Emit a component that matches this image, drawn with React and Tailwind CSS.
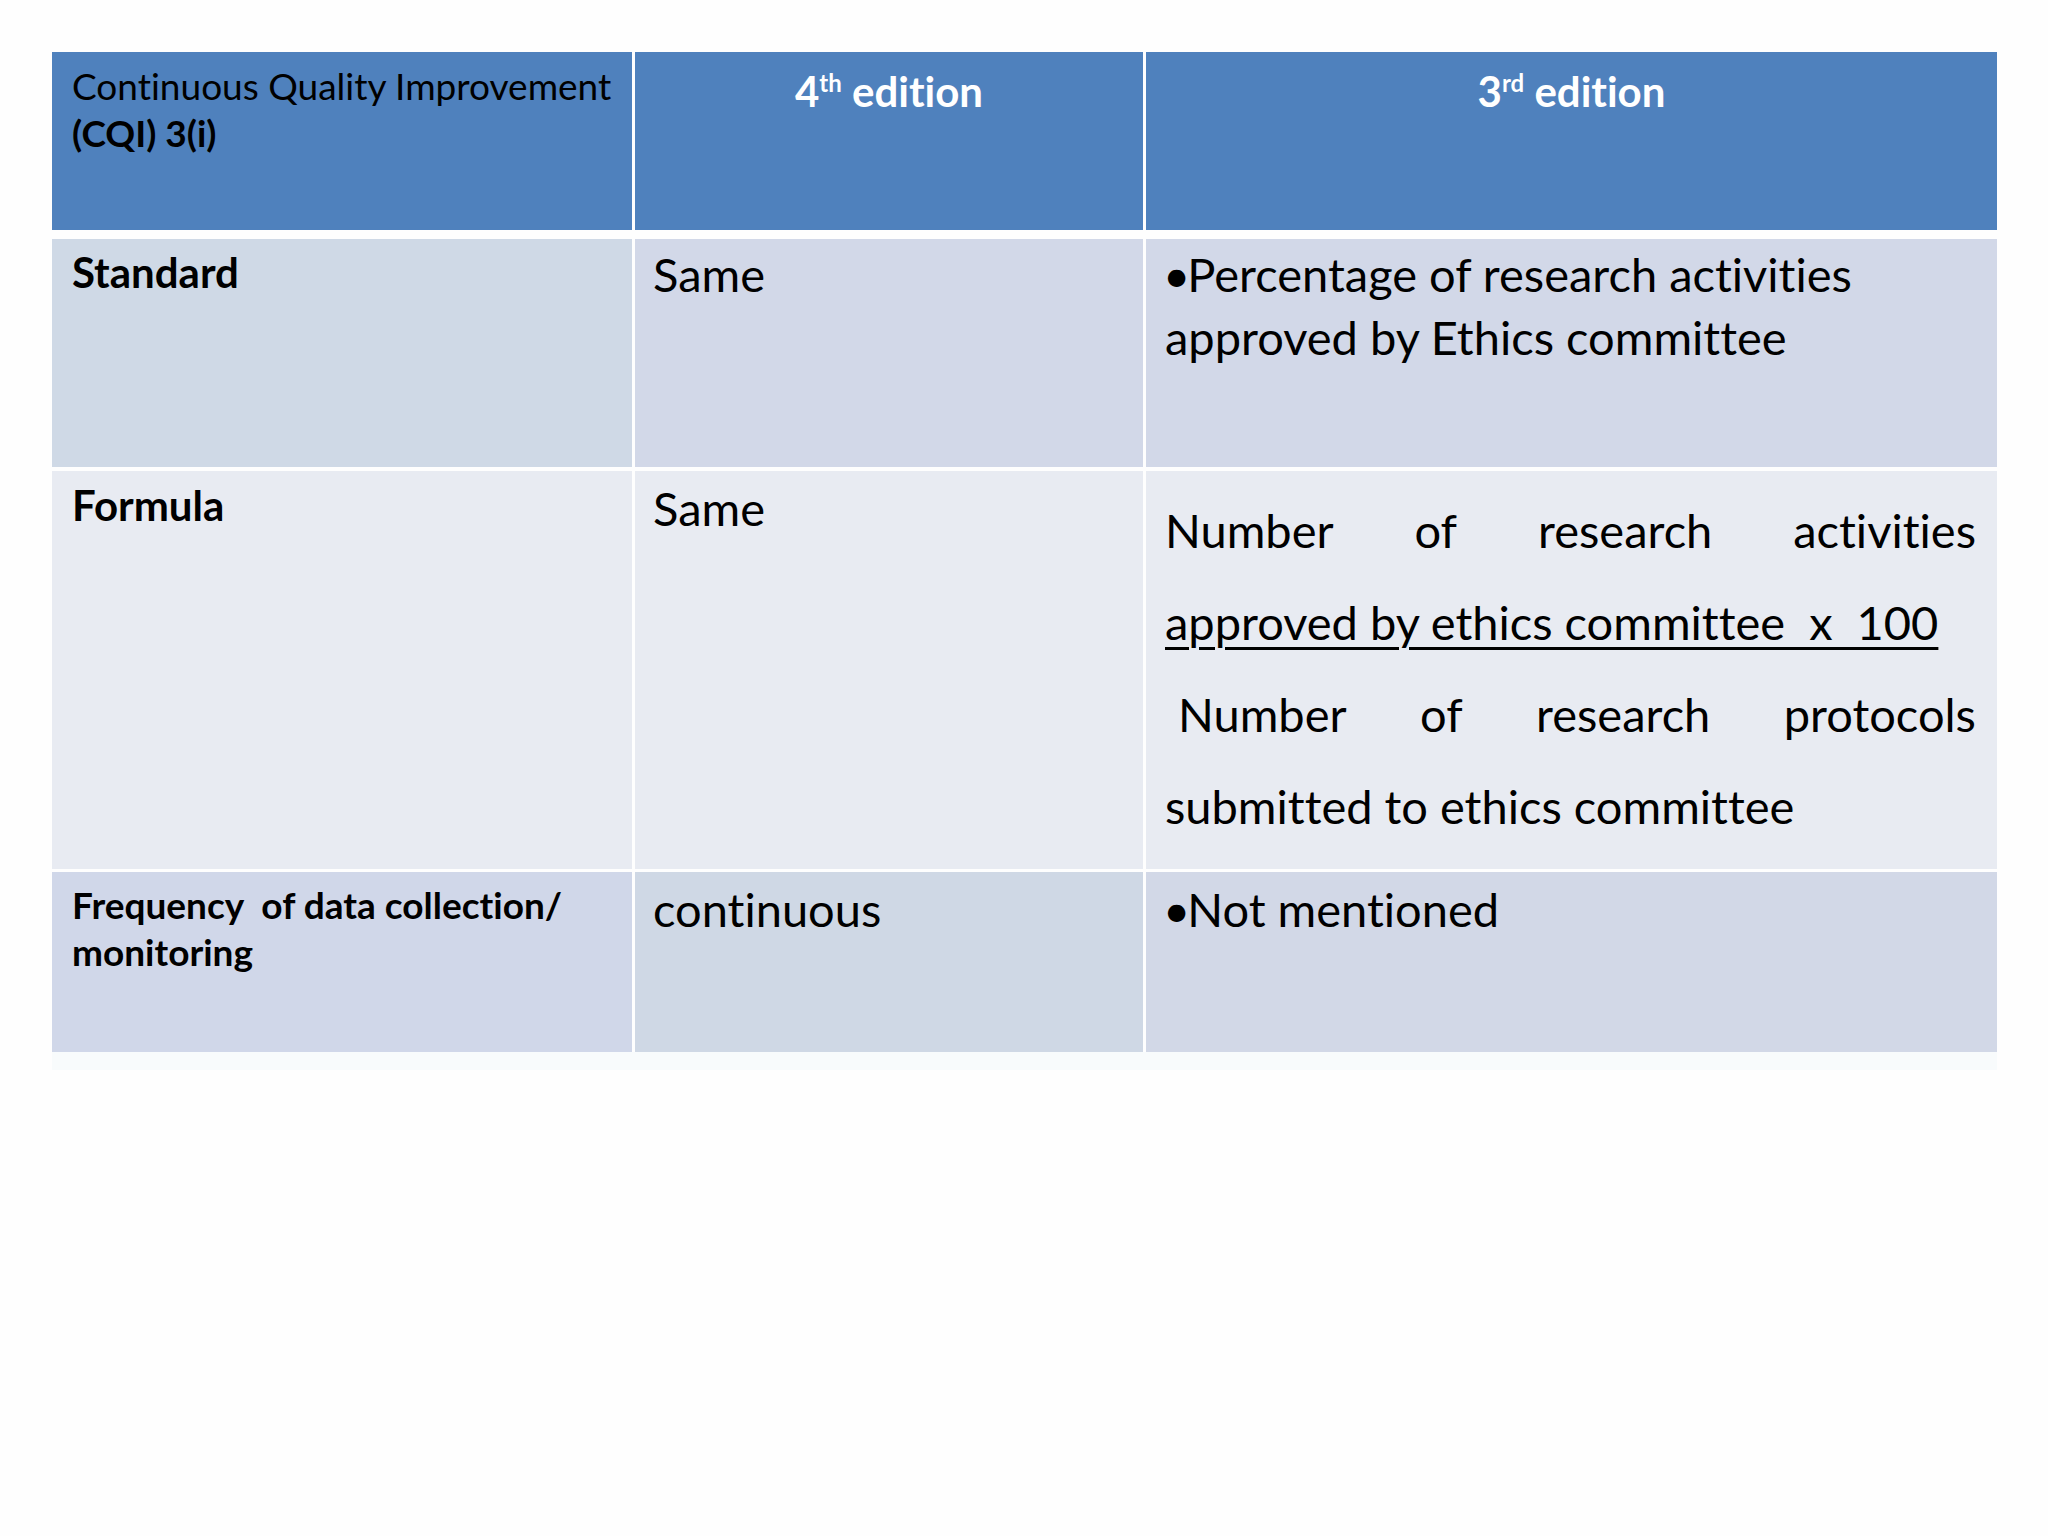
function Bullet() {
  return <span className="inline-block -ml-[2px] -mr-[3px]">•</span>;
}

export default function App() {
  return (
    <div className="w-[2048px] h-[1536px] bg-[#fefefe] pt-[52px] pl-[52px] font-[Lato,sans-serif] text-black [font-variant-ligatures:none]">
      <div className="w-[1945px] flex flex-col">
        {/* Header row */}
        <div className="grid grid-cols-[580px_508px_851px] gap-x-[3px] h-[178px]">
          <div className="bg-[#4f81bd] pl-[20px] pt-[10px] text-[37px] leading-[47px]">
            <div>Continuous Quality Improvement</div>
            <div className="font-bold">(CQI) 3(i)</div>
          </div>
          <div className="bg-[#4f81bd] pt-[7px] text-center text-white font-bold text-[42px] leading-[48px]">
            4<span className="text-[24px] align-[15px]">th</span> edition
          </div>
          <div className="bg-[#4f81bd] pt-[7px] text-center text-white font-bold text-[42px] leading-[48px]">
            3<span className="text-[24px] align-[15px]">rd</span> edition
          </div>
        </div>

        {/* Standard row */}
        <div className="grid grid-cols-[580px_508px_851px] gap-x-[3px] h-[228px] mt-[9px]">
          <div className="bg-[#cfd9e6] pl-[20px] pt-[9px] font-bold text-[42px] leading-[48px]">Standard</div>
          <div className="bg-[#d2d8e8] pl-[18px] pt-[5px] text-[47px] leading-[61px]">Same</div>
          <div className="bg-[#d2d8e8] pl-[19px] pr-[21px] pt-[4px] text-[47px] leading-[63px]">
            <div><Bullet />Percentage of research activities</div>
            <div>approved by Ethics committee</div>
          </div>
        </div>

        {/* Formula row */}
        <div className="grid grid-cols-[580px_508px_851px] gap-x-[3px] h-[398px] mt-[4px]">
          <div className="bg-[#e8ebf2] pl-[20px] pt-[10px] font-bold text-[42px] leading-[48px]">Formula</div>
          <div className="bg-[#e8ebf2] pl-[18px] pt-[7px] text-[47px] leading-[61px]">Same</div>
          <div className="bg-[#e8ebf2] pl-[19px] pr-[21px] pt-[13px] text-[47px] leading-[92px]">
            <div className="flex justify-between">
              <span>Number</span>
              <span>of</span>
              <span>research</span>
              <span>activities</span>
            </div>
            <div className="whitespace-pre">
              <span className="underline decoration-[3px] underline-offset-[7px]">approved by ethics committee  x  100</span>
            </div>
            <div className="flex justify-between pl-[13px]">
              <span>Number</span>
              <span>of</span>
              <span>research</span>
              <span>protocols</span>
            </div>
            <div>submitted to ethics committee</div>
          </div>
        </div>

        {/* Frequency row */}
        <div className="grid grid-cols-[580px_508px_851px] gap-x-[3px] h-[180px] mt-[3px]">
          <div className="bg-[#d0d7e9] pl-[20px] pt-[9px] font-bold text-[37px] leading-[47px]">
            <div className="whitespace-pre">Frequency  of data collection/</div>
            <div>monitoring</div>
          </div>
          <div className="bg-[#cfd8e5] pl-[18px] pt-[7px] text-[47px] leading-[61px]">continuous</div>
          <div className="bg-[#d2d8e7] pl-[19px] pt-[7px] text-[47px] leading-[61px]"><Bullet />Not mentioned</div>
        </div>

        {/* faint shadow strip */}
        <div className="h-[18px] bg-[#f8fbfc]"></div>
      </div>
    </div>
  );
}
